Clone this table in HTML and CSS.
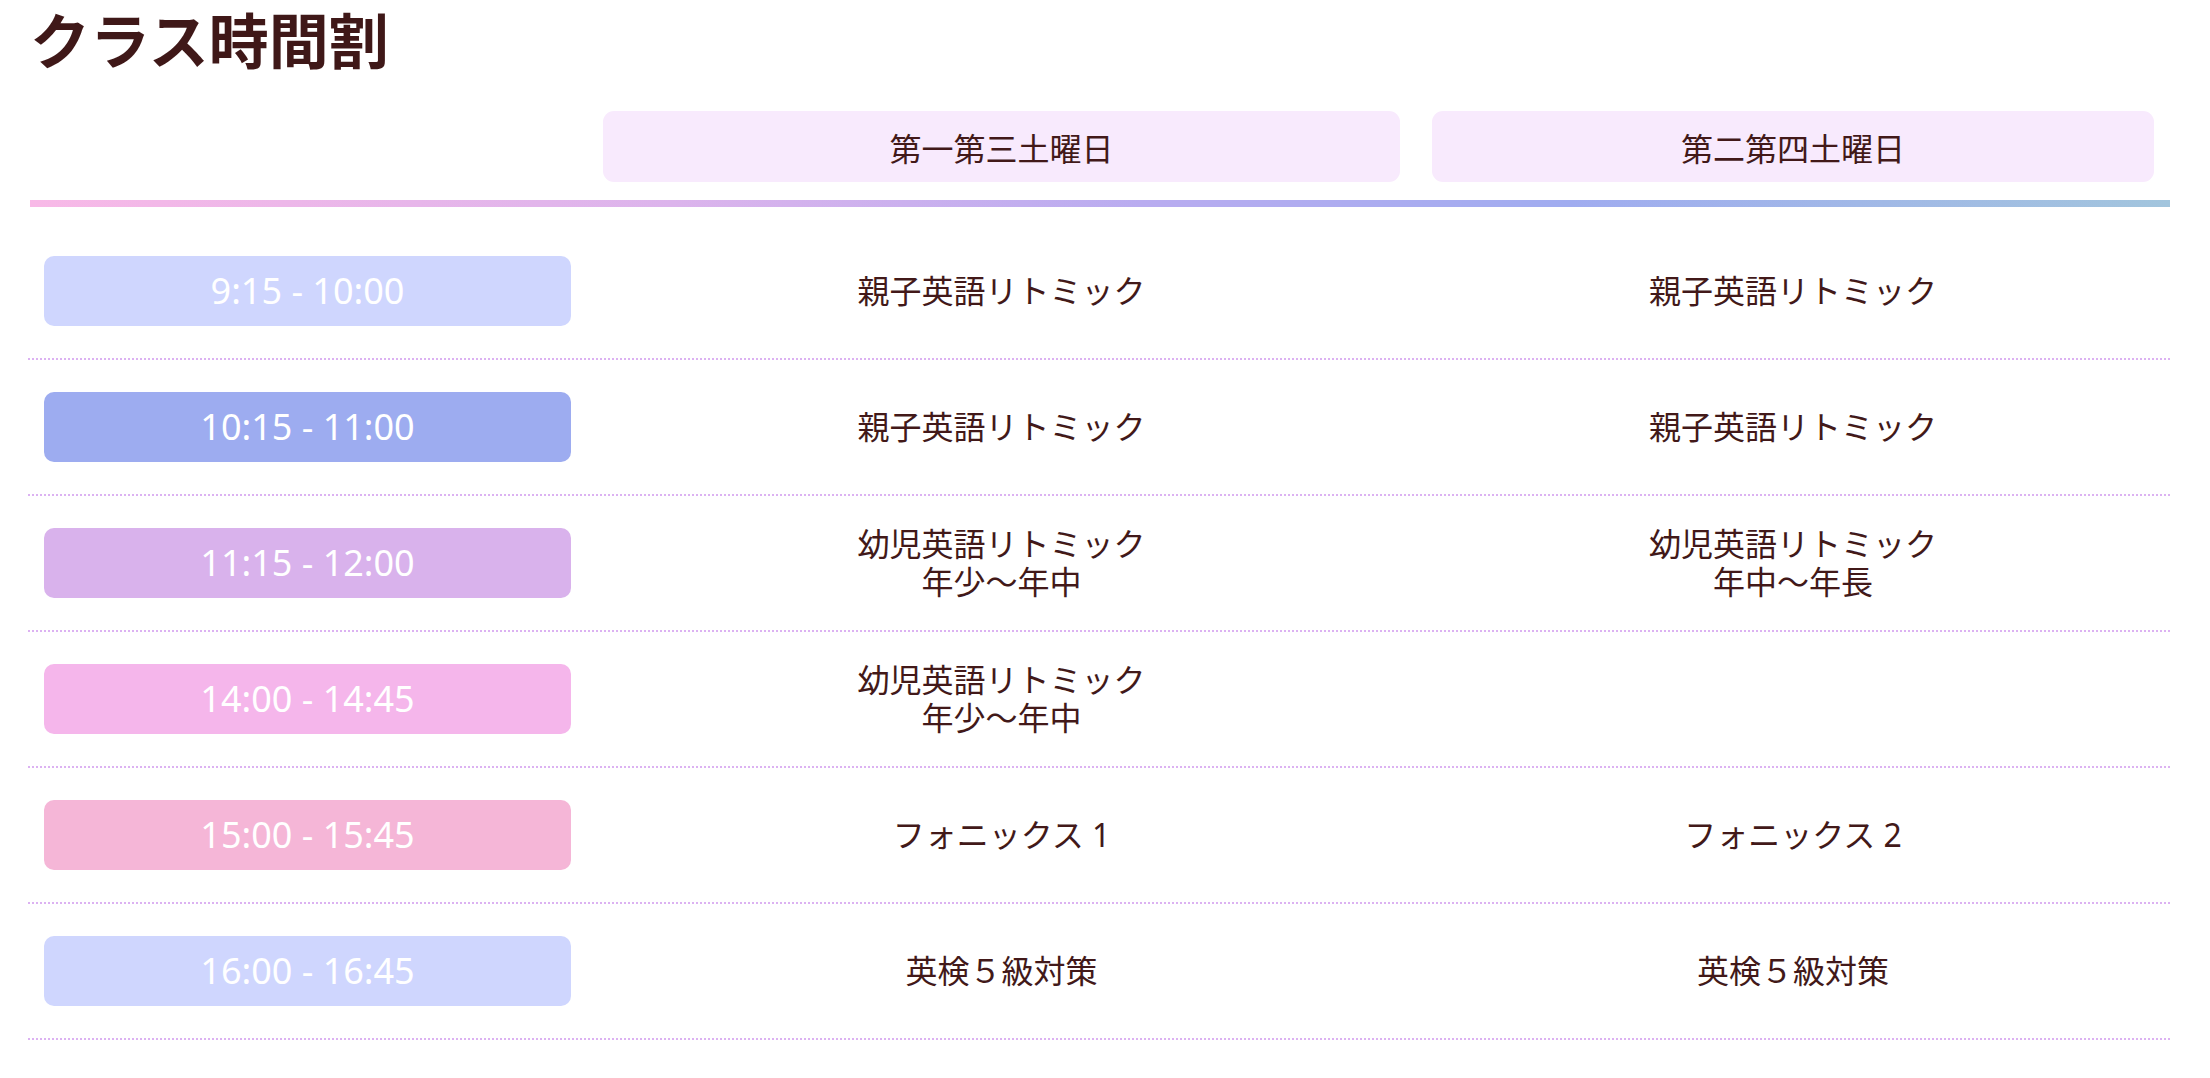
FILE: index.html
```html
<!DOCTYPE html>
<html lang="ja">
<head>
<meta charset="utf-8">
<title>クラス時間割</title>
<link rel="stylesheet" href="styles.css">
</head>
<body>
<main class="page">
  <h1 class="title">クラス時間割</h1>
  <section class="timetable">
    <div class="head">
      <div class="hcol"></div>
      <div class="hcol"><div class="hcell">第一第三土曜日</div></div>
      <div class="hcol"><div class="hcell">第二第四土曜日</div></div>
    </div>
    <div class="rule"></div>
    <div class="rows">
      <div class="row">
        <div class="cell time"><div class="pill c1">9:15 - 10:00</div></div>
        <div class="cell">親子英語リトミック</div>
        <div class="cell">親子英語リトミック</div>
      </div>
      <div class="row">
        <div class="cell time"><div class="pill c2">10:15 - 11:00</div></div>
        <div class="cell">親子英語リトミック</div>
        <div class="cell">親子英語リトミック</div>
      </div>
      <div class="row">
        <div class="cell time"><div class="pill c3">11:15 - 12:00</div></div>
        <div class="cell">幼児英語リトミック<br>年少〜年中</div>
        <div class="cell">幼児英語リトミック<br>年中〜年長</div>
      </div>
      <div class="row">
        <div class="cell time"><div class="pill c4">14:00 - 14:45</div></div>
        <div class="cell">幼児英語リトミック<br>年少〜年中</div>
        <div class="cell"></div>
      </div>
      <div class="row">
        <div class="cell time"><div class="pill c5">15:00 - 15:45</div></div>
        <div class="cell">フォニックス 1</div>
        <div class="cell">フォニックス 2</div>
      </div>
      <div class="row">
        <div class="cell time"><div class="pill c6">16:00 - 16:45</div></div>
        <div class="cell">英検５級対策</div>
        <div class="cell">英検５級対策</div>
      </div>
    </div>
  </section>
</main>
</body>
</html>
```

FILE: styles.css
```css
* { box-sizing: border-box; }

html, body {
  margin: 0;
  padding: 0;
  background: #ffffff;
}

body {
  font-family: "Noto Sans", "Noto Sans CJK JP", sans-serif;
  color: #421919;
}

.page {
  padding: 4px 40px 0 28px;
}

.title {
  margin: 0;
  padding-left: 2px;
  font-family: "Noto Sans CJK JP", sans-serif;
  font-weight: 700;
  font-size: 60px;
  line-height: 68px;
  color: #3f1818;
}

.timetable {
  width: 2142px;
  margin-top: 39px;
}

.head,
.row {
  display: grid;
  grid-template-columns: 559px 829px 754px;
}

.hcol {
  padding: 0 16px;
}

.hcell {
  height: 71px;
  display: flex;
  align-items: center;
  justify-content: center;
  background: #f8eafd;
  border-radius: 11px;
  font-family: "Noto Sans CJK JP", sans-serif;
  font-size: 32px;
  color: #421919;
}

.rule {
  height: 7px;
  margin: 18px 0 0 2px;
  background: linear-gradient(90deg, #f8b9e7 0%, #dcb4ec 30%, #b9acf0 52%, #a0acf0 72%, #a2c5dd 100%);
}

.rows {
  margin-top: 17px;
}

.row {
  height: 136px;
  border-bottom: 2px dotted #dcb2f2;
}

.cell {
  padding: 0 16px;
  display: flex;
  align-items: center;
  justify-content: center;
  text-align: center;
  font-size: 32px;
  line-height: 38px;
  color: #421919;
}

.pill {
  width: 100%;
  height: 70px;
  display: flex;
  align-items: center;
  justify-content: center;
  border-radius: 10px;
  color: #ffffff;
  font-family: "Noto Sans", sans-serif;
  font-size: 36px;
}

.c1 { background: #cfd6fe; }
.c2 { background: #9dacf0; }
.c3 { background: #d9b2ec; }
.c4 { background: #f5b6eb; }
.c5 { background: #f5b6d7; }
.c6 { background: #cfd6fe; }
```
